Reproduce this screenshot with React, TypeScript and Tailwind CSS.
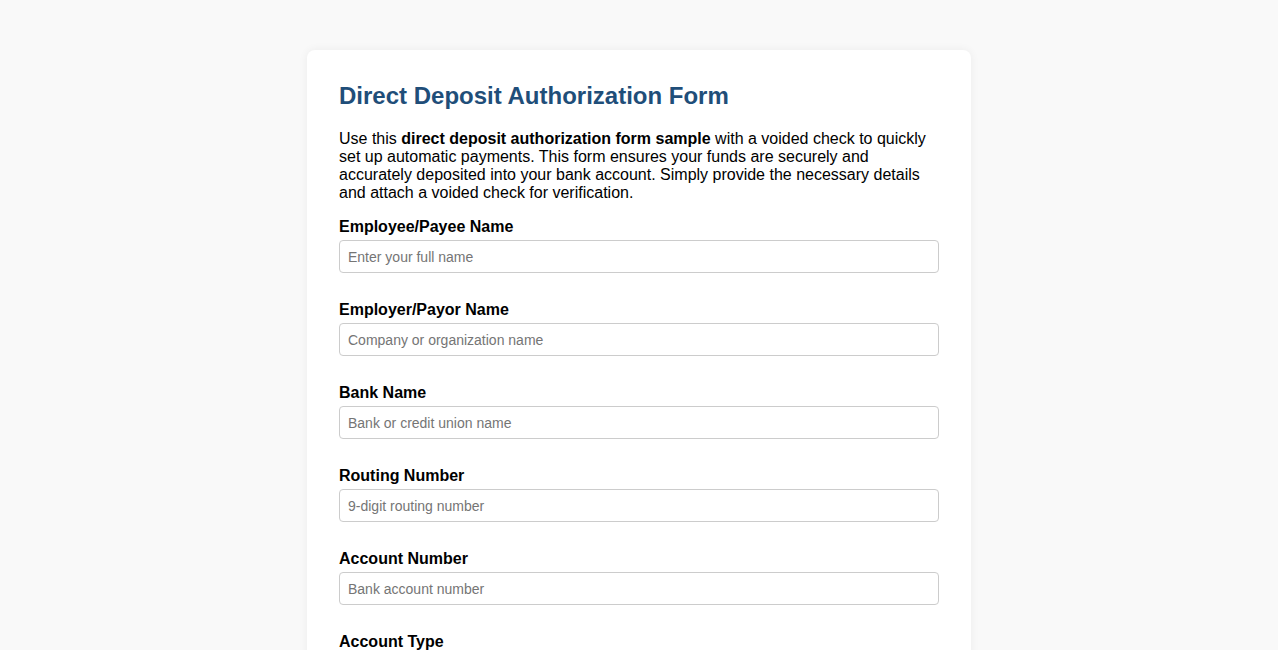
const fields = [
  { label: "Employee/Payee Name", placeholder: "Enter your full name" },
  { label: "Employer/Payor Name", placeholder: "Company or organization name" },
  { label: "Bank Name", placeholder: "Bank or credit union name" },
  { label: "Routing Number", placeholder: "9-digit routing number" },
  { label: "Account Number", placeholder: "Bank account number" },
];

export default function App() {
  return (
    <div className="min-h-screen bg-[#f9f9f9] pt-[50px] pb-10 font-['Liberation_Sans',Arial,sans-serif] text-black">
      <div className="mx-auto w-[664px] rounded-lg bg-white px-8 pt-8 pb-8 shadow-[0_0_10px_rgba(0,0,0,0.06)]">
        <h1 className="mb-5 text-[24px] leading-[28px] font-bold text-[#1f4e79]">
          Direct Deposit Authorization Form
        </h1>
        <p className="mb-4 text-base leading-[18px]">
          Use this <strong>direct deposit authorization form sample</strong> with a voided check to
          quickly set up automatic payments. This form ensures your funds are securely and
          accurately deposited into your bank account. Simply provide the necessary details and
          attach a voided check for verification.
        </p>

        <form className="flex flex-col gap-7">
          {fields.map((field) => (
            <div key={field.label} className="flex flex-col gap-1">
              <label className="text-base leading-[18px] font-bold">{field.label}</label>
              <input
                type="text"
                placeholder={field.placeholder}
                className="h-[33px] w-full rounded-[4px] border border-[#cccccc] px-2 text-[14px] placeholder:text-[#757575] focus:outline-none"
              />
            </div>
          ))}

          <div className="flex flex-col gap-1">
            <label className="text-base leading-[18px] font-bold">Account Type</label>
            <div className="flex gap-4 text-[14px]">
              <label className="flex items-center gap-1">
                <input type="radio" name="accountType" /> Checking
              </label>
              <label className="flex items-center gap-1">
                <input type="radio" name="accountType" /> Savings
              </label>
            </div>
          </div>
        </form>
      </div>
    </div>
  );
}
